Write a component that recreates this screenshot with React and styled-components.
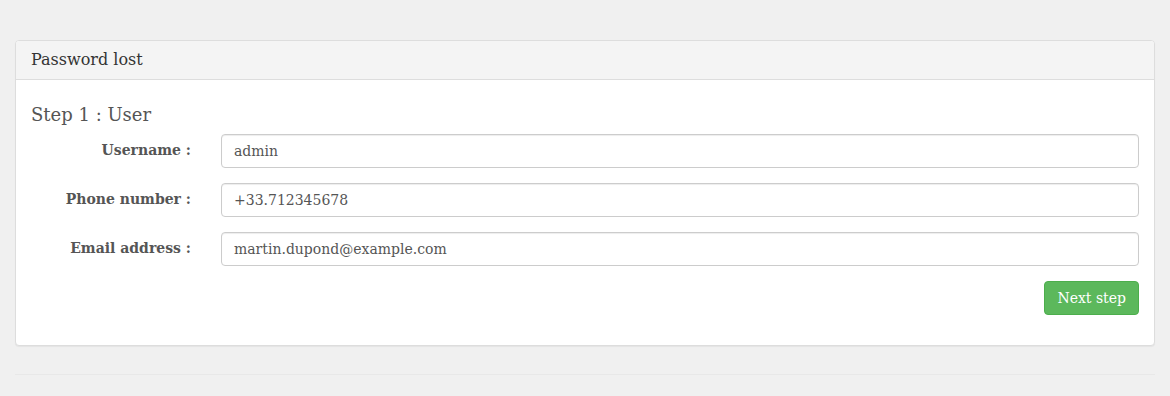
import React from 'react';
import styled, { createGlobalStyle } from 'styled-components';

const GlobalStyle = createGlobalStyle`
  html, body {
    margin: 0;
    padding: 0;
    background: #f0f0f0;
  }
  body {
    font-family: "DejaVu Serif", serif;
    font-size: 14px;
    line-height: 1.42857;
    color: #333;
  }
  * { box-sizing: border-box; }
`;

const Container = styled.div`
  padding: 40px 15px 0;
`;

const Panel = styled.div`
  background: #fff;
  border: 1px solid #ddd;
  border-radius: 4px;
  box-shadow: 0 1px 1px rgba(0, 0, 0, 0.05);
  margin-bottom: 28px;
`;

const PanelHeading = styled.div`
  background: #f4f4f4;
  border-bottom: 1px solid #ddd;
  border-radius: 3px 3px 0 0;
  padding: 9px 15px 9px;
  font-size: 16px;
  line-height: 20px;
  color: #333;
`;

const PanelBody = styled.div`
  padding: 15px;
`;

const StepTitle = styled.h4`
  margin: 10px 0 9px;
  font-size: 18px;
  font-weight: normal;
  line-height: 1.1;
  color: #555;
`;

const FormRow = styled.div`
  display: grid;
  grid-template-columns: 175px 1fr;
  margin-bottom: 15px;
  align-items: center;
`;

const Label = styled.label`
  text-align: right;
  padding: 1px 15px 0 0;
  font-weight: bold;
  color: #555;
`;

const Field = styled.div`
  padding-left: 15px;
`;

const Input = styled.input`
  display: block;
  width: 100%;
  height: 34px;
  padding: 6px 12px;
  font-family: "DejaVu Serif", serif;
  font-size: 14px;
  color: #555;
  background: #fff;
  border: 1px solid #ccc;
  border-radius: 4px;
  box-shadow: inset 0 1px 1px rgba(0, 0, 0, 0.075);
  outline: none;
`;

const Actions = styled.div`
  display: flex;
  justify-content: flex-end;
  margin-bottom: 15px;
`;

const Button = styled.button`
  height: 34px;
  padding: 6px 12px;
  font-family: "DejaVu Serif", serif;
  font-size: 14px;
  line-height: 20px;
  color: #fff;
  background: #5cb85c;
  border: 1px solid #4cae4c;
  border-radius: 4px;
  cursor: pointer;
`;

const Rule = styled.hr`
  margin: 0;
  border: 0;
  border-top: 1px solid #e8e8e8;
`;

const fields = [
  { label: 'Username :', value: 'admin' },
  { label: 'Phone number :', value: '+33.712345678' },
  { label: 'Email address :', value: 'martin.dupond@example.com' },
];

const App = () => (
  <>
    <GlobalStyle />
    <Container>
      <Panel>
        <PanelHeading>Password lost</PanelHeading>
        <PanelBody>
          <StepTitle>Step 1 : User</StepTitle>
          {fields.map(f => (
            <FormRow key={f.label}>
              <Label>{f.label}</Label>
              <Field>
                <Input defaultValue={f.value} />
              </Field>
            </FormRow>
          ))}
          <Actions>
            <Button>Next step</Button>
          </Actions>
        </PanelBody>
      </Panel>
      <Rule />
    </Container>
  </>
);

export default App;
